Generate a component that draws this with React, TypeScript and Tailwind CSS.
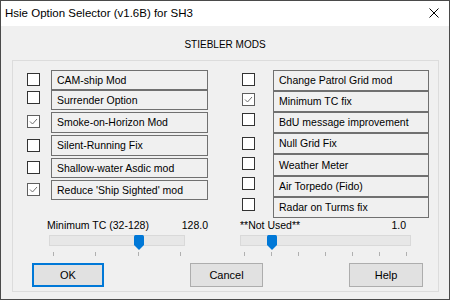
import React from 'react';

type Row = { label: string; checked: boolean; mt: string; h: string; cb: string };

const leftRows: Row[] = [
  { label: 'CAM-ship Mod', checked: false, mt: 'mt-0', h: 'h-[20px]', cb: 'mt-[3px]' },
  { label: 'Surrender Option', checked: false, mt: 'mt-0', h: 'h-[20px]', cb: 'mt-[1px]' },
  { label: 'Smoke-on-Horizon Mod', checked: true, mt: 'mt-[2px]', h: 'h-[21px]', cb: 'mt-[3px]' },
  { label: 'Silent-Running Fix', checked: false, mt: 'mt-[2px]', h: 'h-[21px]', cb: 'mt-[4px]' },
  { label: 'Shallow-water Asdic mod', checked: false, mt: 'mt-[2px]', h: 'h-[20px]', cb: 'mt-[3px]' },
  { label: "Reduce 'Ship Sighted' mod", checked: true, mt: 'mt-[2px]', h: 'h-[20px]', cb: 'mt-[3px]' },
];

const rightRows: Row[] = [
  { label: 'Change Patrol Grid mod', checked: false, mt: 'mt-0', h: 'h-[21px]', cb: 'mt-[3px]' },
  { label: 'Minimum TC fix', checked: true, mt: 'mt-0', h: 'h-[21px]', cb: 'mt-[2px]' },
  { label: 'BdU message improvement', checked: false, mt: 'mt-0', h: 'h-[21px]', cb: 'mt-[1px]' },
  { label: 'Null Grid Fix', checked: false, mt: 'mt-0', h: 'h-[21px]', cb: 'mt-[4px]' },
  { label: 'Weather Meter', checked: false, mt: 'mt-0', h: 'h-[22px]', cb: 'mt-[3px]' },
  { label: 'Air Torpedo (Fido)', checked: false, mt: 'mt-0', h: 'h-[21px]', cb: 'mt-[1px]' },
  { label: 'Radar on Turms fix', checked: false, mt: 'mt-0', h: 'h-[21px]', cb: 'mt-[1px]' },
];

function CheckBox({ checked }: { checked: boolean }) {
  return (
    <div
      className={
        'w-[13px] h-[13px] bg-white border shrink-0 flex items-center justify-center ' +
        (checked ? 'border-[#5f5f5f]' : 'border-[#333333]')
      }
    >
      {checked && (
        <svg width="11" height="11" viewBox="0 0 11 11">
          <path d="M2 5.5 L4.5 8 L9 3" fill="none" stroke="#707070" strokeWidth="1" />
        </svg>
      )}
    </div>
  );
}

function OptionRow({ row, gap }: { row: Row; gap: string }) {
  return (
    <div className={'flex items-start ' + row.mt}>
      <div className={row.cb}>
        <CheckBox checked={row.checked} />
      </div>
      <div
        className={
          'flex-1 border border-[#707070] flex items-center pl-[5px] text-[10.5px] leading-none whitespace-nowrap ' +
          row.h +
          ' ' +
          gap
        }
      >
        {row.label}
      </div>
    </div>
  );
}

function Thumb() {
  return (
    <svg width="10" height="15" viewBox="0 0 10 15" className="block">
      <path d="M0 1.5 Q0 0 1.5 0 H8.5 Q10 0 10 1.5 V10 L5 15 L0 10 Z" fill="#0078d7" />
    </svg>
  );
}

function Slider({
  label,
  value,
  ticks,
  width,
  thumbPos,
  trackOffset,
  blockWidth,
}: {
  label: string;
  value: string;
  ticks: number;
  width: string;
  thumbPos: string;
  trackOffset: string;
  blockWidth: string;
}) {
  return (
    <div className={'flex flex-col ' + blockWidth}>
      <div className="flex justify-between items-center h-[13px] text-[10.5px] leading-[13px] whitespace-nowrap">
        <span>{label}</span>
        <span>{value}</span>
      </div>
      <div className={'relative mt-[3px] ' + trackOffset + ' ' + width}>
        <div className="h-[11px] bg-[#e7e7e7] border border-[#d9d9d9]" />
        <div className={'absolute top-0 ' + thumbPos}>
          <Thumb />
        </div>
        <div className="flex justify-between px-[4px] mt-[6px]">
          {Array.from({ length: ticks }).map((_, i) => (
            <div key={i} className="w-px h-[4px] bg-[#b0b0b0]" />
          ))}
        </div>
      </div>
    </div>
  );
}

export default function App() {
  return (
    <div className="w-[450px] h-[300px] bg-[#f0f0f0] border border-[#4a4a4a] flex flex-col text-black overflow-hidden font-['Liberation_Sans',Arial,sans-serif]">
      <div className="h-[25px] bg-white flex items-center justify-between pl-[4px] pr-[10px] shrink-0">
        <span className="text-[11.5px] leading-none">Hsie Option Selector (v1.6B) for SH3</span>
        <svg width="10" height="10" viewBox="0 0 10 10" className="mt-[-2px]">
          <path d="M0.5 0.5 L9.5 9.5 M9.5 0.5 L0.5 9.5" stroke="#000" strokeWidth="1" fill="none" />
        </svg>
      </div>
      <div className="flex flex-col">
        <div className="mt-[12px] h-[13px] leading-[13px] text-[10px] text-center">STIEBLER MODS</div>
        <div className="mt-[9px] ml-[11px] w-[427px] h-[232px] border border-[#dcdcdc] flex flex-col">
          <div className="flex items-start pt-[9px]">
            <div className="ml-[14px] w-[181px] flex flex-col">
              {leftRows.map((r) => (
                <OptionRow key={r.label} row={r} gap="ml-[11px]" />
              ))}
            </div>
            <div className="ml-[34px] w-[187px] flex flex-col">
              {rightRows.map((r) => (
                <OptionRow key={r.label} row={r} gap="ml-[18px]" />
              ))}
            </div>
          </div>
          <div className="flex items-start mt-[1px]">
            <div className="ml-[34px]">
              <Slider
                label="Minimum TC (32-128)"
                value="128.0"
                ticks={4}
                width="w-[136px]"
                thumbPos="left-[85px]"
                trackOffset="ml-[2px]"
                blockWidth="w-[161px]"
              />
            </div>
            <div className="ml-[31px]">
              <Slider
                label="**Not Used**"
                value="1.0"
                ticks={7}
                width="w-[171px]"
                thumbPos="left-[27px]"
                trackOffset="ml-0"
                blockWidth="w-[167px] pl-[1px]"
              />
            </div>
          </div>
          <div className="flex mt-[7px] text-[11px]">
            <button className="ml-[19px] w-[72px] h-[24px] bg-[#e1e1e1] border-2 border-[#0078d7] flex items-center justify-center">
              OK
            </button>
            <button className="ml-[86px] w-[73px] h-[24px] bg-[#e1e1e1] border border-[#adadad] flex items-center justify-center">
              Cancel
            </button>
            <button className="ml-[86px] w-[74px] h-[24px] bg-[#e1e1e1] border border-[#adadad] flex items-center justify-center">
              Help
            </button>
          </div>
        </div>
      </div>
    </div>
  );
}
